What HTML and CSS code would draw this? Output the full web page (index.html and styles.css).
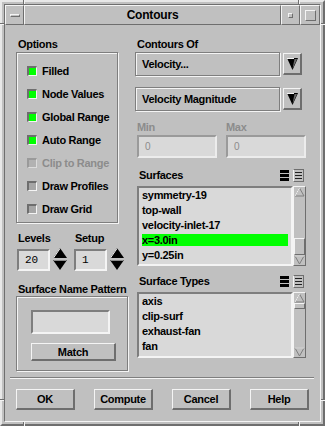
FILE: index.html
```html
<!DOCTYPE html>
<html>
<head>
  <meta charset="UTF-8">
  <title>Contours</title>
  <link rel="stylesheet" href="styles.css">
</head>
<body>
  <div class="window">
    <span class="notch notch-v notch-top-left"></span>
    <span class="notch notch-v notch-top-right"></span>
    <span class="notch notch-v notch-bottom-left"></span>
    <span class="notch notch-v notch-bottom-right"></span>
    <span class="notch notch-h notch-left-top"></span>
    <span class="notch notch-h notch-left-bottom"></span>
    <span class="notch notch-h notch-right-top"></span>
    <span class="notch notch-h notch-right-bottom"></span>

    <div class="frame">
      <div class="titlebar">
        <div class="tb-btn tb-menu"><span class="menu-bar"></span></div>
        <div class="tb-btn tb-title">Contours</div>
        <div class="tb-btn tb-min"><span class="min-box"></span></div>
        <div class="tb-btn tb-max"><span class="max-box"></span></div>
      </div>

      <div class="client">
        <div class="panels">
          <div class="col-left">
            <div class="label top-label">Options</div>
            <div class="group options">
              <div class="check on"><span class="box"></span>Filled</div>
              <div class="check on"><span class="box"></span>Node Values</div>
              <div class="check on"><span class="box"></span>Global Range</div>
              <div class="check on"><span class="box"></span>Auto Range</div>
              <div class="check disabled"><span class="box"></span>Clip to Range</div>
              <div class="check"><span class="box"></span>Draw Profiles</div>
              <div class="check"><span class="box"></span>Draw Grid</div>
            </div>

            <div class="spinners">
              <div class="spin-col">
                <div class="label">Levels</div>
                <div class="spin">
                  <div class="field num">20</div>
                  <svg class="spin-arrows" width="14" height="23" viewBox="0 0 14 23">
                    <polygon points="7,0 14,10 0,10" fill="#000"/>
                    <line x1="0.5" y1="10" x2="7" y2="0.5" stroke="#f4f4f4"/>
                    <polygon points="0,12 14,12 7,22" fill="#000"/>
                    <line x1="0.5" y1="12.5" x2="13.5" y2="12.5" stroke="#8a8a8a"/>
                  </svg>
                </div>
              </div>
              <div class="spin-col">
                <div class="label">Setup</div>
                <div class="spin">
                  <div class="field num">1</div>
                  <svg class="spin-arrows" width="14" height="23" viewBox="0 0 14 23">
                    <polygon points="7,0 14,10 0,10" fill="#000"/>
                    <line x1="0.5" y1="10" x2="7" y2="0.5" stroke="#f4f4f4"/>
                    <polygon points="0,12 14,12 7,22" fill="#000"/>
                    <line x1="0.5" y1="12.5" x2="13.5" y2="12.5" stroke="#8a8a8a"/>
                  </svg>
                </div>
              </div>
            </div>

            <div class="label snp-label">Surface Name Pattern</div>
            <div class="group pattern">
              <div class="field pattern-input"></div>
              <button class="btn match">Match</button>
            </div>
          </div>

          <div class="col-right">
            <div class="label top-label">Contours Of</div>
            <div class="dropdown">
              <div class="dd-field">Velocity...</div>
              <div class="dd-btn">
                <svg width="11" height="12" viewBox="0 0 11 12">
                  <polygon points="0,0 11,0 5.5,12" fill="#000"/>
                  <polygon points="7.5,1 10,1 5.5,11" fill="#6e6e6e"/>
                  <line x1="0" y1="0.5" x2="7" y2="0.5" stroke="#f4f4f4"/>
                </svg>
              </div>
            </div>
            <div class="dropdown second">
              <div class="dd-field">Velocity Magnitude</div>
              <div class="dd-btn">
                <svg width="11" height="12" viewBox="0 0 11 12">
                  <polygon points="0,0 11,0 5.5,12" fill="#000"/>
                  <polygon points="7.5,1 10,1 5.5,11" fill="#6e6e6e"/>
                  <line x1="0" y1="0.5" x2="7" y2="0.5" stroke="#f4f4f4"/>
                </svg>
              </div>
            </div>

            <div class="limits">
              <div class="limit">
                <div class="label dim">Min</div>
                <div class="field limit-field">0</div>
              </div>
              <div class="limit">
                <div class="label dim">Max</div>
                <div class="field limit-field">0</div>
              </div>
            </div>

            <div class="list-head">
              <span>Surfaces</span>
              <div class="icon-btns">
                <svg class="icon-all" width="11" height="13" viewBox="0 0 11 13">
                  <rect width="11" height="13" fill="#c0c0c0"/>
                  <rect x="1" y="1" width="9" height="3" fill="#000"/>
                  <rect x="1" y="5" width="9" height="3" fill="#000"/>
                  <rect x="1" y="9" width="9" height="3" fill="#000"/>
                </svg>
                <svg class="icon-none" width="11" height="13" viewBox="0 0 11 13">
                  <rect x="0.5" y="0.5" width="10" height="12" fill="#c0c0c0" stroke="#6e6e6e"/>
                  <line x1="0.5" y1="0.5" x2="0.5" y2="12.5" stroke="#f4f4f4"/>
                  <line x1="2" y1="3.5" x2="9" y2="3.5" stroke="#222"/>
                  <line x1="2" y1="6.5" x2="9" y2="6.5" stroke="#222"/>
                  <line x1="2" y1="9.5" x2="9" y2="9.5" stroke="#222"/>
                </svg>
              </div>
            </div>
            <div class="list-box">
              <div class="list surfaces">
                <div class="item">symmetry-19</div>
                <div class="item">top-wall</div>
                <div class="item">velocity-inlet-17</div>
                <div class="item selected">x=3.0in</div>
                <div class="item">y=0.25in</div>
              </div>
              <div class="scrollbar">
                <svg width="11" height="10" viewBox="0 0 11 10">
                  <polygon points="5.5,1 10,9 1,9" fill="#c0c0c0" stroke="#7e7e7e"/>
                  <line x1="1" y1="9" x2="5.5" y2="1" stroke="#f4f4f4"/>
                </svg>
                <div class="trough"></div>
                <div class="thumb"></div>
                <svg width="11" height="10" viewBox="0 0 11 10">
                  <polygon points="1,1 10,1 5.5,9" fill="#c0c0c0" stroke="#7e7e7e"/>
                  <line x1="1" y1="1" x2="10" y2="1" stroke="#f4f4f4"/>
                </svg>
              </div>
            </div>

            <div class="list-head">
              <span>Surface Types</span>
              <div class="icon-btns">
                <svg class="icon-all" width="11" height="13" viewBox="0 0 11 13">
                  <rect width="11" height="13" fill="#c0c0c0"/>
                  <rect x="1" y="1" width="9" height="3" fill="#000"/>
                  <rect x="1" y="5" width="9" height="3" fill="#000"/>
                  <rect x="1" y="9" width="9" height="3" fill="#000"/>
                </svg>
                <svg class="icon-none" width="11" height="13" viewBox="0 0 11 13">
                  <rect x="0.5" y="0.5" width="10" height="12" fill="#c0c0c0" stroke="#6e6e6e"/>
                  <line x1="0.5" y1="0.5" x2="0.5" y2="12.5" stroke="#f4f4f4"/>
                  <line x1="2" y1="3.5" x2="9" y2="3.5" stroke="#222"/>
                  <line x1="2" y1="6.5" x2="9" y2="6.5" stroke="#222"/>
                  <line x1="2" y1="9.5" x2="9" y2="9.5" stroke="#222"/>
                </svg>
              </div>
            </div>
            <div class="list-box">
              <div class="list types">
                <div class="item">axis</div>
                <div class="item">clip-surf</div>
                <div class="item">exhaust-fan</div>
                <div class="item">fan</div>
              </div>
              <div class="scrollbar types">
                <svg width="11" height="10" viewBox="0 0 11 10">
                  <polygon points="5.5,1 10,9 1,9" fill="#c0c0c0" stroke="#7e7e7e"/>
                  <line x1="1" y1="9" x2="5.5" y2="1" stroke="#f4f4f4"/>
                </svg>
                <div class="thumb small"></div>
                <div class="trough"></div>
                <svg width="11" height="10" viewBox="0 0 11 10">
                  <polygon points="1,1 10,1 5.5,9" fill="#c0c0c0" stroke="#7e7e7e"/>
                  <line x1="1" y1="1" x2="10" y2="1" stroke="#f4f4f4"/>
                </svg>
              </div>
            </div>
          </div>
        </div>

        <div class="separator"></div>

        <div class="actions">
          <button class="btn">OK</button>
          <button class="btn">Compute</button>
          <button class="btn">Cancel</button>
          <button class="btn">Help</button>
        </div>
      </div>
    </div>
  </div>
</body>
</html>
```

FILE: styles.css
```css
html, body {
  margin: 0;
  padding: 0;
  background-color: #c0c0c0;
}

body {
  font-family: "Liberation Sans", Arial, sans-serif;
  font-size: 11px;
  font-weight: bold;
  letter-spacing: -0.3px;
  color: #000;
}

/* window frame */
.window {
  position: relative;
  width: 325px;
  height: 426px;
  box-sizing: border-box;
  border: 2px solid;
  border-color: #e8e8e8 #6e6e6e #6e6e6e #e8e8e8;
  padding: 2px;
}

.frame {
  height: 100%;
  box-sizing: border-box;
  border: 1px solid;
  border-color: #6e6e6e #f4f4f4 #f4f4f4 #6e6e6e;
  display: flex;
  flex-direction: column;
}

.notch {
  position: absolute;
}

.notch-v {
  width: 0;
  height: 4px;
  border-left: 1px solid #6e6e6e;
  border-right: 1px solid #f4f4f4;
}

.notch-h {
  width: 4px;
  height: 0;
  border-top: 1px solid #6e6e6e;
  border-bottom: 1px solid #f4f4f4;
}

.notch-top-left { top: -2px; left: 21px; }
.notch-top-right { top: -2px; left: 296px; }
.notch-bottom-left { bottom: -2px; left: 21px; }
.notch-bottom-right { bottom: -2px; left: 296px; }
.notch-left-top { left: -2px; top: 21px; }
.notch-left-bottom { left: -2px; top: 397px; }
.notch-right-top { right: -2px; top: 21px; }
.notch-right-bottom { right: -2px; top: 397px; }

/* title bar */
.titlebar {
  display: flex;
  height: 20px;
}

.tb-btn {
  box-sizing: border-box;
  border: 1px solid;
  border-color: #f4f4f4 #6e6e6e #6e6e6e #f4f4f4;
  display: flex;
  align-items: center;
  justify-content: center;
}

.tb-menu { width: 19px; }
.tb-min { width: 19px; }
.tb-max { width: 20px; }

.tb-title {
  flex: 1;
  font-size: 12px;
  letter-spacing: -0.2px;
}

.menu-bar {
  width: 10px;
  height: 3px;
  box-sizing: border-box;
  border: 1px solid;
  border-color: #f4f4f4 #6e6e6e #6e6e6e #f4f4f4;
}

.min-box {
  width: 5px;
  height: 5px;
  box-sizing: border-box;
  border: 1px solid;
  border-color: #f4f4f4 #6e6e6e #6e6e6e #f4f4f4;
}

.max-box {
  width: 11px;
  height: 11px;
  box-sizing: border-box;
  border: 1px solid;
  border-color: #f4f4f4 #6e6e6e #6e6e6e #f4f4f4;
}

/* dialog body */
.client {
  flex: 1;
  display: flex;
  flex-direction: column;
}

.panels {
  display: flex;
  gap: 7px;
  padding: 0 14px 0 11px;
}

.col-left {
  width: 112px;
  display: flex;
  flex-direction: column;
}

.col-right {
  width: 171px;
  display: flex;
  flex-direction: column;
}

.label {
  height: 14px;
  line-height: 14px;
  padding-left: 2px;
  white-space: nowrap;
}

.label.dim {
  color: #8c8c8c;
  padding-left: 0;
}

.top-label {
  margin-top: 12px;
}

.group {
  box-sizing: border-box;
  border: 1px solid #7e7e7e;
  box-shadow: inset 1px 1px 0 #f4f4f4, 1px 1px 0 #f4f4f4;
}

.options {
  width: 102px;
  height: 171px;
  margin-top: 1px;
  padding: 6px 0 0 10px;
}

.check {
  height: 23px;
  display: flex;
  align-items: center;
  gap: 5px;
  white-space: nowrap;
}

.check .box {
  width: 10px;
  height: 10px;
  box-sizing: border-box;
  border-style: solid;
  border-width: 2px 1px 1px 2px;
  border-color: #6e6e6e #f4f4f4 #f4f4f4 #6e6e6e;
  background-color: #a6a6a6;
}

.check.on .box {
  background-color: #00ff00;
}

.check.disabled {
  color: #8c8c8c;
}

.check.disabled .box {
  border-color: #9a9a9a #dcdcdc #dcdcdc #9a9a9a;
  background-color: #b2b2b2;
}

.field {
  box-sizing: border-box;
  background-color: #d9d9d9;
  border: 2px solid;
  border-color: #7e7e7e #f4f4f4 #f4f4f4 #7e7e7e;
}

.spinners {
  display: flex;
  gap: 7px;
  margin-top: 8px;
  padding-left: 1px;
}

.spin-col {
  display: flex;
  flex-direction: column;
  gap: 3px;
}

.spin-col .label {
  padding-left: 1px;
}

.spin {
  display: flex;
  align-items: center;
  gap: 3px;
}

.num {
  width: 33px;
  height: 22px;
  padding-left: 6px;
  font-family: "Liberation Mono", monospace;
  font-weight: normal;
  letter-spacing: 0;
  line-height: 18px;
}

.snp-label {
  margin-top: 11px;
}

.pattern {
  width: 112px;
  height: 75px;
  padding: 13px 0 0 14px;
  display: flex;
  flex-direction: column;
}

.pattern-input {
  width: 79px;
  height: 24px;
}

.btn {
  box-sizing: border-box;
  margin: 0;
  padding: 0;
  font: inherit;
  letter-spacing: inherit;
  color: #000;
  background-color: #c0c0c0;
  border-style: solid;
  border-width: 1px 2px 2px 1px;
  border-color: #f4f4f4 #6e6e6e #6e6e6e #f4f4f4;
}

.match {
  width: 85px;
  height: 18px;
  margin-top: 9px;
}

/* right column */
.dropdown {
  display: flex;
  align-items: center;
  gap: 3px;
  height: 24px;
  margin-top: 1px;
}

.dropdown.second {
  margin-top: 11px;
}

.dd-field {
  width: 145px;
  height: 24px;
  box-sizing: border-box;
  padding-left: 6px;
  line-height: 22px;
  border: 1px solid #7e7e7e;
  box-shadow: inset 1px 1px 0 #f4f4f4, 1px 1px 0 #f4f4f4;
}

.dd-btn {
  width: 19px;
  height: 22px;
  box-sizing: border-box;
  border-style: solid;
  border-width: 1px 2px 2px 1px;
  border-color: #f4f4f4 #6e6e6e #6e6e6e #f4f4f4;
  display: flex;
  align-items: center;
  justify-content: center;
}

.limits {
  display: flex;
  gap: 9px;
  margin-top: 9px;
  padding-left: 2px;
}

.limit {
  width: 80px;
  display: flex;
  flex-direction: column;
  gap: 1px;
}

.limit-field {
  height: 23px;
  padding-left: 6px;
  line-height: 19px;
  font-weight: normal;
  font-size: 10px;
  color: #8c8c8c;
  border-color: #9a9a9a #ececec #ececec #9a9a9a;
}

.list-head {
  display: flex;
  align-items: center;
  justify-content: space-between;
  height: 14px;
  margin-top: 10px;
  padding: 0 2px 0 4px;
}

.list-head + .list-box + .list-head {
  margin-top: 8px;
}

.icon-btns {
  display: flex;
  gap: 3px;
}

.icon-btns svg {
  display: block;
}

.list-box {
  display: flex;
  margin-top: 4px;
  padding-left: 2px;
}

.list {
  width: 156px;
  box-sizing: border-box;
  background-color: #d9d9d9;
  border: 2px solid;
  border-color: #7e7e7e #f4f4f4 #f4f4f4 #7e7e7e;
  overflow: hidden;
}

.list.surfaces { height: 80px; }
.list.types { height: 66px; }

.item {
  height: 15px;
  line-height: 15px;
  margin: 0 3px;
  white-space: nowrap;
}

.item.selected {
  background: linear-gradient(transparent 1px, #00ff00 1px, #00ff00 13px, transparent 13px);
}

.scrollbar {
  width: 13px;
  height: 80px;
  box-sizing: border-box;
  border: 1px solid;
  border-color: #f4f4f4 #6e6e6e #6e6e6e #f4f4f4;
  display: flex;
  flex-direction: column;
  align-items: center;
}

.scrollbar.types {
  height: 66px;
}

.scrollbar svg {
  display: block;
  flex-shrink: 0;
}

.trough {
  flex: 1;
}

.thumb {
  width: 11px;
  height: 17px;
  box-sizing: border-box;
  border: 1px solid;
  border-color: #f4f4f4 #6e6e6e #6e6e6e #f4f4f4;
}

.thumb.small {
  height: 6px;
}

/* bottom buttons */
.separator {
  border-top: 1px solid #7e7e7e;
  border-bottom: 1px solid #f4f4f4;
  margin: 6px 6px 0 5px;
}

.actions {
  display: flex;
  gap: 19px;
  padding-left: 11px;
  margin-top: 10px;
}

.actions .btn {
  width: 59px;
  height: 21px;
}
```
